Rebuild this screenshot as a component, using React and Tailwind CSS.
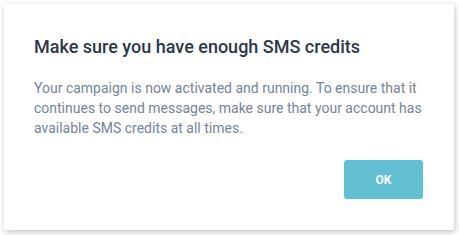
export default function App() {
  return (
    <div className="h-[235px] w-[459px] bg-white p-1 font-['Roboto',sans-serif]">
      <div className="flex h-[226px] w-[450px] flex-col rounded-[2px] bg-white px-[30px] pt-[31px] shadow-[1px_2px_6px_rgba(0,0,0,0.25)]">
        <h2 className="text-[18px] font-medium leading-6 text-[#2d3848]">
          Make sure you have enough SMS credits
        </h2>
        <p className="mt-[19px] text-[14px] leading-5 text-[#75849a]">
          Your campaign is now activated and running. To ensure that it continues to send messages, make sure that your account has available SMS credits at all times.
        </p>
        <div className="mt-[22px] flex justify-end pr-[1px]">
          <button className="h-[39px] w-[79px] rounded-[3px] bg-[#62bfd4] text-[12px] font-bold text-white">
            OK
          </button>
        </div>
      </div>
    </div>
  )
}
